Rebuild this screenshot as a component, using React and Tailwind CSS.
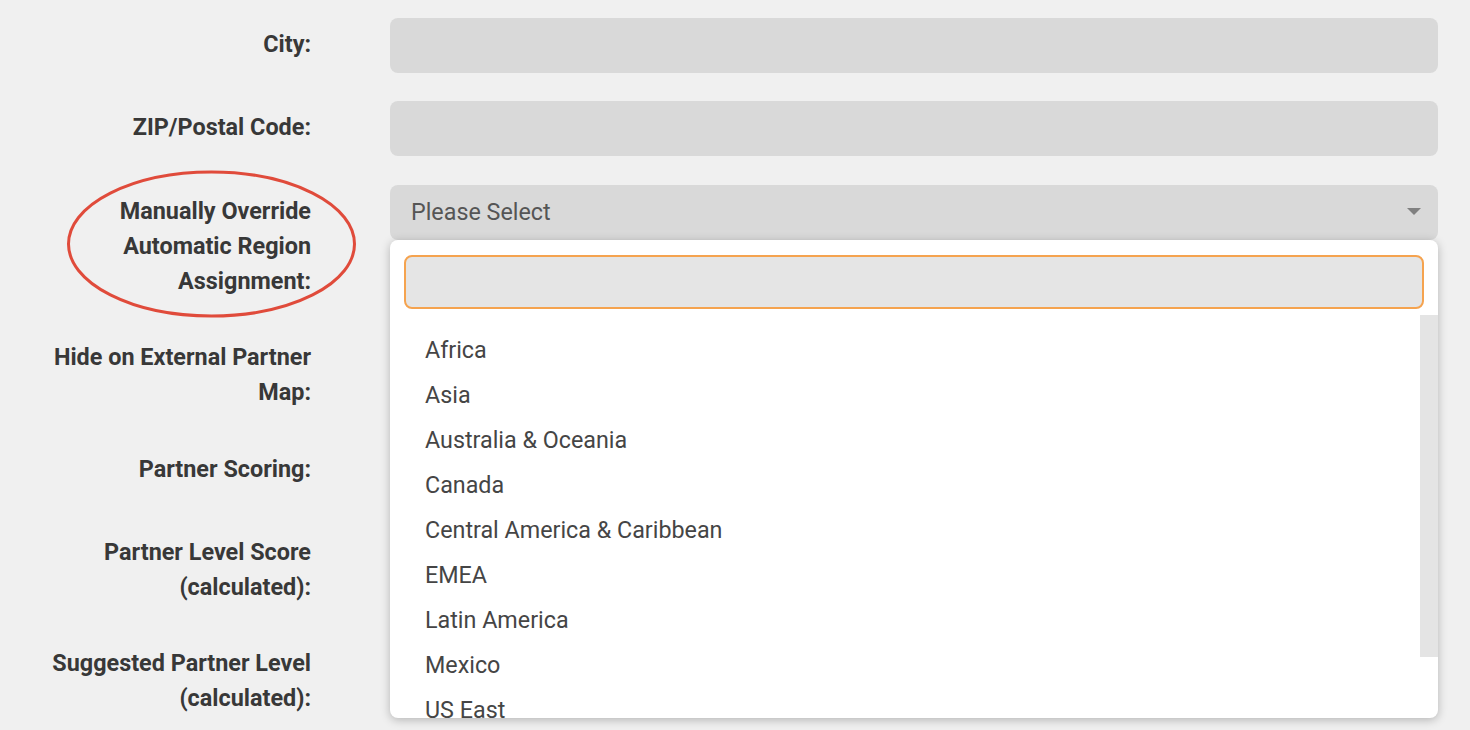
import React from "react";

const rows = [
  { label: ["City:"], type: "input" },
  { label: ["ZIP/Postal Code:"], type: "input" },
  { label: ["Manually Override", "Automatic Region", "Assignment:"], type: "select" },
  { label: ["Hide on External Partner", "Map:"], type: "none" },
  { label: ["Partner Scoring:"], type: "input" },
  { label: ["Partner Level Score", "(calculated):"], type: "input" },
  { label: ["Suggested Partner Level", "(calculated):"], type: "input" },
];

const options = [
  "Africa",
  "Asia",
  "Australia & Oceania",
  "Canada",
  "Central America & Caribbean",
  "EMEA",
  "Latin America",
  "Mexico",
  "US East",
];

function Dropdown() {
  return (
    <div className="absolute left-0 right-0 top-[55px] z-20 h-[478px] overflow-hidden rounded-[8px] bg-white shadow-[0_2px_10px_rgba(0,0,0,0.25)]">
      <div className="px-[14px] pt-[15px]">
        <div className="h-[54px] rounded-[8px] border-2 border-[#f5a34f] bg-[#e5e5e5]" />
      </div>
      <div className="relative">
        <div className="absolute right-0 top-[6px] h-[342px] w-[18px] bg-[#e4e4e4]" />
        <ul className="pt-[19px] pl-[35px]">
          {options.map((o) => (
            <li key={o} className="h-[45px] text-[23.3px] leading-[45px] text-[#454545]">
              {o}
            </li>
          ))}
        </ul>
      </div>
    </div>
  );
}

export default function App() {
  return (
    <div
      className="h-[730px] w-[1470px] overflow-hidden bg-[#f0f0f0] pt-[18px]"
      style={{ fontFamily: "Roboto, 'Liberation Sans', sans-serif" }}
    >
      {rows.map((r, i) => (
        <div key={i} className="mb-[28.4px] flex items-start">
          <div className="w-[311px] shrink-0 pt-[9px] pb-[4px] text-right text-[23.4px] font-bold leading-[35px] text-[#383838]">
            {r.label.map((l, j) => (
              <div key={j} className="whitespace-nowrap">{l}</div>
            ))}
          </div>
          <div className="ml-[79px] mr-[32px] flex-1">
            {r.type === "input" && (
              <div className="h-[55px] rounded-[8px] bg-[#d9d9d9]" />
            )}
            {r.type === "select" && (
              <div className="relative">
                <div className="flex h-[55px] items-center justify-between rounded-[8px] bg-[#d9d9d9] pl-[21px] pr-[17px]">
                  <span className="text-[23.3px] text-[#555555]">Please Select</span>
                  <svg width="14" height="8" viewBox="0 0 14 8">
                    <path d="M0 0 L14 0 L7 7 Z" fill="#808080" />
                  </svg>
                </div>
                <Dropdown />
              </div>
            )}
          </div>
        </div>
      ))}
      <svg
        className="pointer-events-none absolute left-0 top-0 z-30"
        width="1470"
        height="730"
      >
        <ellipse cx="211.5" cy="244" rx="143" ry="72" fill="none" stroke="#e04b3b" strokeWidth="3" />
      </svg>
    </div>
  );
}
